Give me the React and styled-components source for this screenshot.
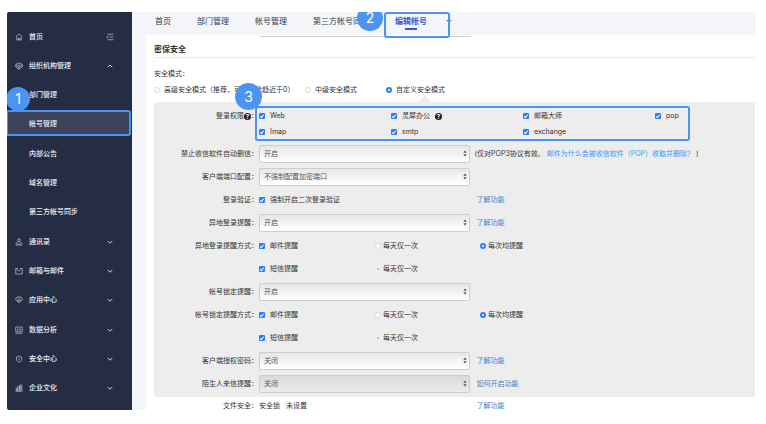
import React from "react";
import styled, { createGlobalStyle, css } from "styled-components";

const BLUE = "#4b94f2";

const Global = createGlobalStyle`
  * { box-sizing: border-box; }
  body {
    margin: 0;
    background: #fff;
    color: #333;
    font: 7px/10px Inter, "Noto Sans CJK SC", sans-serif;
  }
  input, select, button { font: inherit; color: inherit; margin: 0; padding: 0; }
  ul { list-style: none; margin: 0; padding: 0; }
  a { text-decoration: none; }
`;

/* ---------- shell ---------- */
const Page = styled.div`
  padding: 12px 10px 12px 7px;
`;
const Shell = styled.div`
  display: grid;
  grid-template-columns: 125px minmax(0, 1fr);
  background: #f4f5f8;
  border-radius: 2px 0 0 2px;
  overflow: hidden;
`;

const Badge = styled.span`
  position: absolute;
  z-index: 2;
  width: ${(p) => p.$size}px;
  height: ${(p) => p.$size}px;
  left: ${(p) => p.$left}px;
  top: ${(p) => p.$top}px;
  border-radius: 50%;
  background: ${BLUE};
  color: #fff;
  font-size: 14px;
  font-weight: 400;
  line-height: ${(p) => p.$size}px;
  text-align: center;
`;

/* ---------- sidebar ---------- */
const Sidebar = styled.nav`
  background: #252d45;
  color: #eef0f5;
  padding: 10px 0 7px;
`;
const MenuList = styled.ul`
  display: grid;
  grid-auto-rows: minmax(29px, 1fr);
  height: 100%;
`;
const MenuItem = styled.li`
  position: relative;
  display: flex;
  ${(p) =>
    p.$active &&
    css`
      margin: 0 1px 3px -1px;
      padding-top: 1px;
      background: #3b435b;
      border: 2px solid ${BLUE};
      border-radius: 3px;
    `}
`;
const MenuLink = styled.a`
  flex: 1;
  display: grid;
  grid-template-columns: 8px 1fr 8px;
  column-gap: 6px;
  align-items: center;
  padding: 0 18px 0 ${(p) => (p.$active ? 7 : 8)}px;
  color: inherit;
  font-weight: 500;
`;
const Icon = styled.svg`
  display: block;
  width: 8px;
  height: 8px;
  fill: none;
  stroke: currentColor;
  stroke-width: ${(p) => p.$weight || 1.3};
  opacity: 0.85;
`;

const icons = {
  home: (
    <>
      <path d="M1.5 7.5 8 2l6.500 5.500M3.500 7v7h9V7" />
      <path d="M6.500 14v-3.500h3V14" />
    </>
  ),
  org: (
    <>
      <path d="M8 1.500 14.500 5v5L8 14.500 1.500 10V5z" />
      <path d="M1.500 6.500 8 10l6.500-3.500M5 5.500 8 7l3-1.500M8 10v4.500" />
    </>
  ),
  contacts: (
    <>
      <circle cx="8" cy="4.500" r="2.800" />
      <path d="M6.500 7.500 2 11v3h12v-3L9.500 7.500M5 12h6" />
    </>
  ),
  mail: (
    <>
      <path d="M6 3H1.500v11h13V3H10" />
      <path d="M4 4.500 8 8.500l4-4" />
    </>
  ),
  apps: (
    <>
      <path d="M4 2h8l3 4-2 3.500H3L1 6z" />
      <path d="M5 6h6M5 9.500 8 14l3-4.500" />
    </>
  ),
  data: (
    <>
      <path d="M1.500 2h13v9.500h-13zM1 14.500h14" />
      <path d="M5 9V6M8 9V4.500M11 9V5.500" />
    </>
  ),
  shield: (
    <>
      <path d="M8 2 13 4v4.500c0 2.500-2 4.500-5 6-3-1.500-5-3.500-5-6V4z" />
      <path d="M8 5.500v4.500" />
    </>
  ),
  culture: (
    <>
      <path d="M1 14.500h14M2.500 14V8.500h3V14M5.500 14V5h4v9M9.500 14V2h4v12" />
      <path d="M11.500 5v6" />
    </>
  ),
  fold: <path d="M3 2.500h12M7 8h8M3 13.500h12M4.500 5.500 1.500 8l3 2.500" />,
  up: <path d="M3.500 10.500 8 6l4.500 4.500" />,
  down: <path d="M3.500 6 8 10.500 12.500 6" />,
};
const Glyph = ({ name, weight }) => (
  <Icon viewBox="0 0 16 16" $weight={weight} aria-hidden="true">
    {icons[name]}
  </Icon>
);

const menu = [
  { text: "首页", icon: "home", end: "fold" },
  { text: "组织机构管理", icon: "org", end: "up" },
  { text: "部门管理" },
  { text: "帐号管理", active: true },
  { text: "内部公告" },
  { text: "域名管理" },
  { text: "第三方帐号同步" },
  { text: "通讯录", icon: "contacts", end: "down" },
  { text: "邮箱与邮件", icon: "mail", end: "down" },
  { text: "应用中心", icon: "apps", end: "down" },
  { text: "数据分析", icon: "data", end: "down" },
  { text: "安全中心", icon: "shield", end: "down" },
  { text: "企业文化", icon: "culture", end: "down" },
];

/* ---------- tabs ---------- */
const Main = styled.main`
  min-width: 0;
  padding-left: 14px;
`;
const TabBar = styled.nav`
  display: flex;
  height: 23px;
  padding-left: 9px;
`;
const Tabs = styled.ul`
  display: flex;
  gap: 26px;
  white-space: nowrap;
`;
const Tab = styled.li`
  position: relative;
  font-size: 8px;
  line-height: 18px;
  ${(p) =>
    p.$active &&
    css`
      font-weight: 700;
      &::after {
        content: "";
        position: absolute;
        left: 10px;
        right: 10px;
        bottom: 5px;
        height: 2px;
        background: #3559d8;
      }
    `}
`;
const TabLink = styled.a`
  color: ${(p) => (p.$active ? "#3559d8" : "#333b52")};
`;
const TabRing = styled.span`
  position: absolute;
  z-index: 1;
  inset: 0 -23px -3px -11px;
  border: 2px solid ${BLUE};
  border-radius: 3px;
  pointer-events: none;
`;
const MoreTabs = styled.button`
  display: flex;
  align-items: center;
  height: 18px;
  margin-left: 18px;
  border: 0;
  background: none;
`;

/* ---------- content ---------- */
const Sheet = styled.section`
  background: #fff;
  padding-left: 8px;
`;
const ScrolledField = styled.div`
  height: 2px;
  width: 35%;
  margin-left: 106px;
  border-bottom: 1px solid #cfd2d8;
`;
const Title = styled.h2`
  margin: 0;
  padding-top: 5px;
  font-size: 8px;
  line-height: 15px;
  font-weight: 700;
  border-bottom: 1px solid #e9eaec;
`;
const Modes = styled.fieldset`
  border: 0;
  margin: 8px 0 4px;
  padding: 0;
  line-height: 16px;
`;
const Legend = styled.legend`
  padding: 0;
`;
const ModeRow = styled.div`
  display: grid;
  grid-template-columns: 151px 81px auto;
  justify-content: start;
`;
const Choice = styled.label`
  position: relative;
  display: flex;
  align-items: center;
  gap: ${(p) => p.$gap || 5}px;
  line-height: 16px;
  white-space: nowrap;
  ${(p) =>
    p.$pointer &&
    css`
      &::after {
        content: "";
        position: absolute;
        left: 33px;
        bottom: -4px;
        border: solid transparent;
        border-width: 0 6px 7px;
        border-bottom-color: #ededed;
      }
    `}
`;
const Radio = styled.input.attrs({ type: "radio" })`
  appearance: none;
  flex: none;
  width: 6px;
  height: 6px;
  border-radius: 50%;
  background: #fff;
  border: 1px solid #dcdcdc;
  &:checked {
    border: 2px solid #2f7cf6;
  }
  &:disabled {
    border: 2px solid #f1f1f1;
    background: #aaa;
  }
`;
const Check = styled.input.attrs({ type: "checkbox" })`
  appearance: none;
  flex: none;
  display: flex;
  justify-content: center;
  align-items: center;
  width: 6px;
  height: 6px;
  border-radius: 1px;
  background: #fff;
  &:checked {
    background: #2f7cf6;
  }
  &:checked::after {
    content: "";
    width: 1px;
    height: 3px;
    border: solid #fff;
    border-width: 0 1px 1px 0;
    transform: rotate(40deg);
  }
`;
const Help = styled.button`
  width: 7px;
  height: 7px;
  border: 0;
  border-radius: 50%;
  background: #222;
  && {
    color: #fff;
    font-size: 6px;
    line-height: 7px;
    font-weight: 700;
  }
`;

const Panel = styled.div`
  margin-right: 1px;
  padding: 6px 0 2px;
  background: #ededed;
  border-radius: 4px 0 0 4px;
`;
const Row = styled.div`
  display: grid;
  grid-template-columns: 104px minmax(0, 211fr) minmax(0, 285fr);
  column-gap: 1px;
  align-items: center;
  min-height: 23px;
`;
const Name = styled.div`
  display: flex;
  justify-content: flex-end;
  align-items: center;
  white-space: nowrap;
`;
const PermRow = styled(Row)`
  align-items: start;
  margin-bottom: 2px;
  & > ${Name} {
    height: 16px;
  }
`;
const Wide = styled.div`
  grid-column: 2 / -1;
`;
const Perms = styled(Wide)`
  position: relative;
  display: grid;
  grid-template-columns: repeat(3, 1fr) 33px;
  grid-auto-rows: 16px;
  margin-right: 67px;
`;
const PermRing = styled.span`
  position: absolute;
  inset: -2px -2px -1px -4px;
  border: 2px solid ${BLUE};
  border-radius: 3px;
  pointer-events: none;
`;
const Notify = styled(Wide)`
  display: grid;
  grid-template-columns: minmax(0, 116fr) minmax(0, 105fr) minmax(0, 275fr);
`;
const Picker = styled.div`
  display: grid;
  align-items: center;
  & > * {
    grid-area: 1 / 1;
  }
`;
const Select = styled.select`
  appearance: none;
  width: 100%;
  height: 18px;
  padding: 0 14px 0 4px;
  border: 1px solid #cdcdcd;
  border-radius: 2px;
  color: #555;
  background: ${(p) =>
    p.$dim
      ? "linear-gradient(#d9d9d9, #ececec)"
      : "linear-gradient(#e7e7e7, #ffffff)"};
`;
const Arrows = styled.svg`
  justify-self: end;
  width: 4px;
  height: 7px;
  margin-right: 3px;
  fill: #555;
  pointer-events: none;
`;
const Extra = styled.div`
  padding-left: ${(p) => (p.$note ? 4 : 6)}px;
  white-space: nowrap;
`;
const Link = styled.a`
  color: ${(p) => (p.$bright ? "#3f97f6" : "#4583c4")};
`;
const FileRow = styled(Row)`
  min-height: 0;
  padding-top: 4px;
  margin-right: 1px;
  line-height: 9px;
`;
const FileState = styled.div`
  display: flex;
  gap: 6px;
`;

const ToggleBox = ({ text, help }) => (
  <Choice>
    <Check defaultChecked />
    {text}
    {help && <Help type="button" aria-label="帮助">?</Help>}
  </Choice>
);

const SelectRow = ({ id, label, value, dim, note, children }) => (
  <Row>
    <Name as="label" htmlFor={id}>{label}：</Name>
    <Picker>
      <Select id={id} $dim={dim} defaultValue={value}>
        <option>{value}</option>
      </Select>
      <Arrows viewBox="0 0 4 8" aria-hidden="true">
        <path d="M2 0.500 4 3.200H0zM2 7.500 4 4.800H0z" />
      </Arrows>
    </Picker>
    <Extra $note={note}>{children}</Extra>
  </Row>
);

const NotifyRows = ({ id, label }) => (
  <>
    <Row>
      <Name>{label}：</Name>
      <Notify>
        <ToggleBox text="邮件提醒" />
        <Choice $gap={2}><Radio name={id} />每天仅一次</Choice>
        <Choice $gap={2}><Radio name={id} defaultChecked />每次均提醒</Choice>
      </Notify>
    </Row>
    <Row>
      <Name />
      <Notify>
        <ToggleBox text="短信提醒" />
        <Choice $gap={2}><Radio name={id + "-sms"} disabled />每天仅一次</Choice>
      </Notify>
    </Row>
  </>
);

export default function App() {
  return (
    <Page>
      <Global />
      <Shell>
        <Sidebar>
          <MenuList>
            {menu.map((m) => (
              <MenuItem key={m.text} $active={m.active}>
                <MenuLink href="#" $active={m.active}>
                  {m.icon ? <Glyph name={m.icon} /> : <span />}
                  {m.text}
                  {m.end && <Glyph name={m.end} weight={m.end === "fold" ? 1.3 : 2} />}
                </MenuLink>
                {m.active && <Badge $size={24} $left={-2} $top={-25}>1</Badge>}
              </MenuItem>
            ))}
          </MenuList>
        </Sidebar>
        <Main>
          <TabBar>
            <Tabs>
              {["首页", "部门管理", "帐号管理", "第三方帐号同步"].map((t) => (
                <Tab key={t}><TabLink href="#">{t}</TabLink></Tab>
              ))}
              <Tab $active>
                <TabLink href="#" $active>编辑帐号</TabLink>
                <TabRing />
                <Badge $size={26} $left={-38} $top={-7}>2</Badge>
              </Tab>
            </Tabs>
            <MoreTabs type="button" aria-label="更多">
              <Glyph name="down" weight={2} />
            </MoreTabs>
          </TabBar>
          <Sheet>
            <ScrolledField />
            <Title>密保安全</Title>
            <Modes>
              <Legend>安全模式：</Legend>
              <ModeRow>
                <Choice $gap={4}><Radio name="mode" />高级安全模式（推荐，可将风险趋近于0）</Choice>
                <Choice $gap={4}><Radio name="mode" />中级安全模式</Choice>
                <Choice $gap={4} $pointer><Radio name="mode" defaultChecked />自定义安全模式</Choice>
              </ModeRow>
            </Modes>
            <Panel>
              <PermRow>
                <Name>登录权限<Help type="button" aria-label="帮助">?</Help>：</Name>
                <Perms>
                  <ToggleBox text="Web" />
                  <ToggleBox text="灵犀办公" help />
                  <ToggleBox text="邮箱大师" />
                  <ToggleBox text="pop" />
                  <ToggleBox text="Imap" />
                  <ToggleBox text="smtp" />
                  <ToggleBox text="exchange" />
                  <PermRing>
                    <Badge $size={27} $left={-22} $top={-25}>3</Badge>
                  </PermRing>
                </Perms>
              </PermRow>
              <SelectRow id="autodel" label="禁止收信软件自动删信" value="开启" note>
                (仅对POP3协议有效。 <Link $bright href="#">邮件为什么会被收信软件（POP）收取并删除？</Link> )
              </SelectRow>
              <SelectRow id="port" label="客户端端口配置" value="不强制配置加密端口" />
              <Row>
                <Name>登录验证：</Name>
                <ToggleBox text="强制开启二次登录验证" />
                <Extra><Link href="#">了解功能</Link></Extra>
              </Row>
              <SelectRow id="remote" label="异地登录提醒" value="开启">
                <Link href="#">了解功能</Link>
              </SelectRow>
              <NotifyRows id="remote-way" label="异地登录提醒方式" />
              <SelectRow id="lock" label="帐号锁定提醒" value="开启" />
              <NotifyRows id="lock-way" label="帐号锁定提醒方式" />
              <SelectRow id="authcode" label="客户端授权密码" value="关闭">
                <Link href="#">了解功能</Link>
              </SelectRow>
              <SelectRow id="stranger" label="陌生人来信提醒" value="关闭" dim>
                <Link href="#">如何开启功能</Link>
              </SelectRow>
            </Panel>
            <FileRow>
              <Name>文件安全：</Name>
              <FileState><span>安全锁</span><span>未设置</span></FileState>
              <Extra><Link href="#">了解功能</Link></Extra>
            </FileRow>
          </Sheet>
        </Main>
      </Shell>
    </Page>
  );
}
